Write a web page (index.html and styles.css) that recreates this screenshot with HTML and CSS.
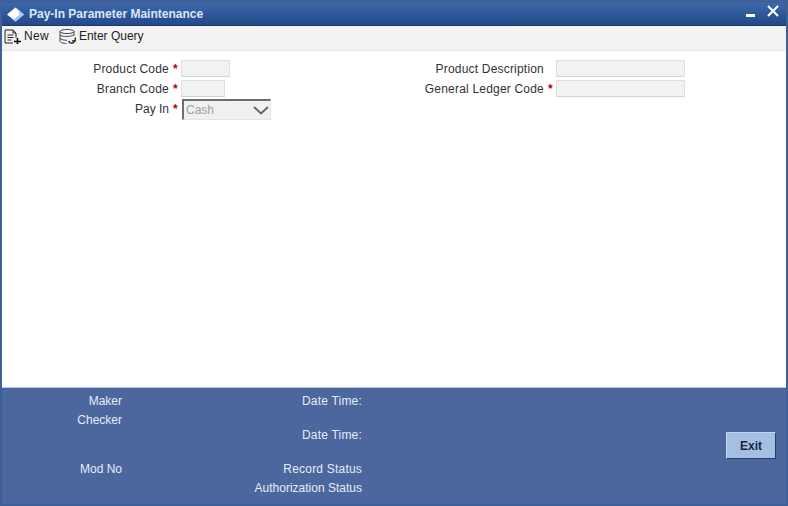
FILE: index.html
```html
<!DOCTYPE html>
<html lang="en">

<head>
    <meta charset="UTF-8">
    <title>Pay-In Parameter Maintenance</title>
    <link rel="stylesheet" href="styles.css">
</head>

<body>
    <div class="window">
        <div class="titlebar">
            <svg class="logo" width="17" height="15" viewBox="0 0 18 15">
                <path d="M9 0 L18 7.500 L9 15 L0 7.500 Z" fill="#fff" />
                <path d="M12 2.500 L18 7.500 L9 15 L6.500 13 L13.500 7.500 Z" fill="#a9c4ea" />
            </svg>
            <span class="title">Pay-In Parameter Maintenance</span>
            <span class="min-btn"></span>
            <svg class="close-btn" width="12" height="12" viewBox="0 0 12 12">
                <path d="M1 1 L11 11 M11 1 L1 11" stroke="#fff" stroke-width="2" fill="none" />
            </svg>
        </div>

        <div class="toolbar">
            <svg class="tool-icon" width="18" height="15" viewBox="0 0 18 15">
                <path d="M1 14 V1 H9 L12 4 V9 M9 1 V4 H12 M3.500 6 H9.500 M3.500 8.500 H9.500 M3.500 11 H7.500 M1 14 H9"
                    stroke="#222" stroke-width="1" fill="none" />
                <path d="M10 12.500 H17 M13.500 9 V15" stroke="#000" stroke-width="1.600" fill="none" />
            </svg>
            <span class="tool-label tool-label-new">New</span>
            <svg class="tool-icon tool-icon-query" width="17" height="15" viewBox="0 0 17 15">
                <ellipse cx="8" cy="2.500" rx="7" ry="2" stroke="#444" fill="#fff" />
                <path d="M1 2.500 V12 C1 13.800 5 14.500 7.500 14.500 M15 2.500 V6.500 M1 6 C3.500 8 11 8 15 6 M1 9.500 C3 11 6 11.300 8 11.300"
                    stroke="#444" fill="none" />
                <path d="M9.500 12 C11 15 15 15 16 11 M16.300 8.500 V11.800 H13" stroke="#222" stroke-width="1.300" fill="none" />
            </svg>
            <span class="tool-label">Enter Query</span>
        </div>

        <div class="content">
            <div class="form-col form-col-left">
                <div class="form-row">
                    <label class="field-label">Product Code</label>
                    <span class="req">*</span>
                    <input class="field w-product" type="text" disabled>
                </div>
                <div class="form-row">
                    <label class="field-label">Branch Code</label>
                    <span class="req">*</span>
                    <input class="field w-branch" type="text" disabled>
                </div>
                <div class="form-row form-row-select">
                    <label class="field-label">Pay In</label>
                    <span class="req">*</span>
                    <div class="select-box">
                        <span>Cash</span>
                        <svg width="16" height="9" viewBox="0 0 16 9">
                            <path d="M1 1 L8 7.500 L15 1" stroke="#666" stroke-width="2" fill="none" />
                        </svg>
                    </div>
                </div>
            </div>
            <div class="form-col form-col-right">
                <div class="form-row">
                    <label class="field-label">Product Description</label>
                    <span class="req"></span>
                    <input class="field w-wide" type="text" disabled>
                </div>
                <div class="form-row">
                    <label class="field-label">General Ledger Code</label>
                    <span class="req">*</span>
                    <input class="field w-wide" type="text" disabled>
                </div>
            </div>
        </div>

        <div class="footer">
            <div class="audit audit-names">
                <div class="audit-row">Maker</div>
                <div class="audit-row">Checker</div>
                <div class="audit-row mod-no">Mod No</div>
            </div>
            <div class="audit audit-stamps">
                <div class="audit-row">Date Time:</div>
                <div class="audit-row second-date">Date Time:</div>
                <div class="audit-row record-status">Record Status</div>
                <div class="audit-row auth-status">Authorization Status</div>
            </div>
            <button class="exit-btn" type="button">Exit</button>
        </div>
    </div>
</body>

</html>
```

FILE: styles.css
```css
/* General Reset */
* {
    margin: 0;
    padding: 0;
    box-sizing: border-box;
    font-family: 'Liberation Sans', Arial, sans-serif;
}

body {
    width: 788px;
    height: 506px;
    overflow: hidden;
    background: #fff;
}

.window {
    width: 788px;
    height: 506px;
    display: flex;
    flex-direction: column;
    border-left: 2px solid #3f5f98;
    border-right: 2px solid #3f5f98;
    border-bottom: 2px solid #3f5f98;
}

/* Title bar */
.titlebar {
    height: 26px;
    display: flex;
    align-items: center;
    padding: 0 7px 0 5px;
    background: linear-gradient(180deg, #3d68aa 0%, #2c5596 60%, #234a88 100%);
    border-top: 3px solid #3f5f98;
    border-bottom: 1px solid #1b3668;
}

.logo {
    margin-right: 5px;
}

.title {
    flex: 1;
    color: #dde6f5;
    font-size: 12px;
    font-weight: bold;
}

.min-btn {
    width: 9px;
    height: 3px;
    margin: 3px 12px 0 0;
    background: #fff;
}

.close-btn {
    margin-top: -7px;
}

/* Toolbar */
.toolbar {
    height: 25px;
    display: flex;
    align-items: center;
    padding: 0 0 4px 2px;
    background: #f3f3f3;
    border-bottom: 1px solid #e6e6e6;
}

.tool-icon {
    margin-right: 2px;
}

.tool-icon-query {
    margin-left: 10px;
    margin-right: 3px;
}

.tool-label {
    font-size: 12px;
    color: #222;
}

.tool-label-new {
    letter-spacing: 0.3px;
}

/* Form */
.content {
    flex: 1;
    display: flex;
    padding-top: 9px;
    background: #fff;
}

.form-col-left {
    width: 372px;
}

.form-row {
    display: flex;
    align-items: center;
    height: 17px;
    margin-bottom: 3px;
}

.form-row-select {
    height: 21px;
    margin-top: -1px;
}

.field-label {
    font-size: 12px;
    color: #333;
    text-align: right;
    letter-spacing: 0.2px;
}

.form-row-select .field-label {
    letter-spacing: 0;
    padding-bottom: 2px;
}

.form-col-left .field-label {
    width: 167px;
}

.form-col-right .field-label {
    width: 170px;
}

.req {
    width: 12px;
    padding-left: 4px;
    color: #c00000;
    font-size: 12px;
    font-weight: bold;
}

.form-row-select .req {
    padding-bottom: 2px;
}

.field {
    height: 17px;
    background: #f2f2f2;
    border: 1px solid #e0e0e0;
    border-bottom-color: #d4d4d4;
}

.w-product {
    width: 49px;
}

.w-branch {
    width: 44px;
}

.w-wide {
    width: 129px;
}

.select-box {
    width: 89px;
    height: 21px;
    display: flex;
    align-items: center;
    justify-content: space-between;
    padding: 0 1px 0 2px;
    margin-left: 1px;
    background: #f0f0ee;
    border-top: 2px solid #6e6e6e;
    border-left: 2px solid #6e6e6e;
    border-right: 1px solid #e4e4e4;
    border-bottom: 1px solid #e4e4e4;
    font-size: 12px;
    color: #a0a0a0;
}

/* Footer */
.footer {
    height: 117px;
    display: flex;
    padding-top: 6px;
    background: #4b679e;
    border-top: 1px solid #b8c6de;
    color: #e6ecf7;
    font-size: 12px;
}

.audit {
    text-align: right;
}

.audit-names {
    width: 120px;
}

.audit-stamps {
    width: 240px;
    letter-spacing: 0.2px;
}

.audit-row {
    height: 14px;
    line-height: 14px;
    margin-bottom: 5px;
}

.auth-status {
    letter-spacing: 0;
}

.mod-no {
    margin-top: 35px;
}

.second-date {
    margin-top: 20px;
}

.record-status {
    margin-top: 20px;
}

.exit-btn {
    width: 50px;
    height: 27px;
    margin: 38px 0 0 364px;
    background: #a3bfe4;
    border: 1px solid #c4d4ec;
    border-right-color: #2c3f63;
    border-bottom-color: #2c3f63;
    font-size: 12px;
    font-weight: bold;
    color: #1c2536;
}
```
